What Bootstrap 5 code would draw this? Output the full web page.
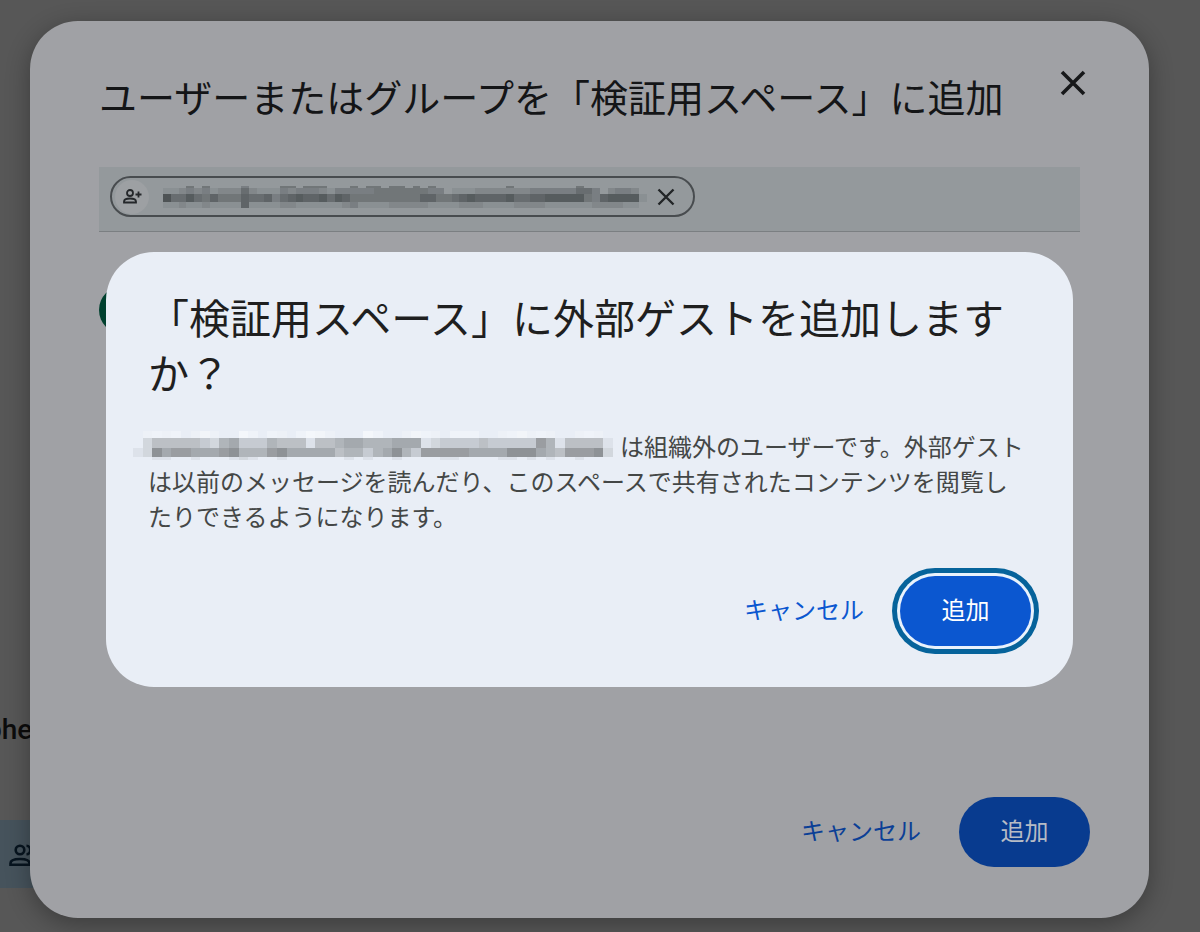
<!DOCTYPE html>
<html lang="ja">
<head>
<meta charset="utf-8">
<meta name="viewport" content="width=device-width, initial-scale=1">
<title>ユーザーまたはグループを追加</title>
<link href="https://cdn.jsdelivr.net/npm/bootstrap@5.3.0/dist/css/bootstrap.min.css" rel="stylesheet">
<style>
  body { background: #575757; font-family: "Noto Sans CJK JP", sans-serif; color: #1f1f1f; }
  .page-behind { font-family: Roboto, "Noto Sans CJK JP", sans-serif; }
  .behind-name { left: -14px; top: 712px; font-size: 28px; line-height: 36px; font-weight: 500; color: #0c0c0c; }
  .behind-pill { left: -60px; top: 820px; width: 180px; height: 68px; border-radius: 20px; background: #46535c; padding-left: 67px; }
  .sheet { margin: 21px 51px 14px 30px; min-height: calc(100vh - 35px); border-radius: 48px; background: #a0a1a5;
           padding: 0 59px 51px 69px; box-shadow: 0 6px 24px rgba(0,0,0,.32); }
  .sheet-title { font-size: 38px; line-height: 56px; font-weight: 400; margin: 47px 0 43px; color: #141517; }
  .close-btn { right: 52px; top: 38px; width: 48px; height: 48px; }
  .people-field { background: #94999c; border-bottom: 1px solid #7b7f82; height: 65px; padding: 9px 11px; margin-right: 10px; }
  .chip { height: 41px; width: 585px; border: 2px solid #484c4f; border-radius: 21px; padding: 0 14px 0 3px; }
  .chip-icon { width: 34px; height: 34px; background: #9da0a3; margin-right: 14px; }
  .avatar { width: 48px; height: 48px; background: #00402f; margin-top: 54px; }
  .btn-pill { width: 131px; height: 70px; border-radius: 35px; font-size: 24px; line-height: 36px; padding: 0 0 4px; }
  .btn-text { font-size: 24px; line-height: 36px; padding: 0 0 4px; }
  .sheet-actions { gap: 38px; }
  .confirm-actions { gap: 36px; }
  .sheet .btn-dim { background: #083b8f; color: #b6bbc5; }
  .sheet .btn-text-dim { color: #0b3f96; }
  .confirm { left: 76px; right: 76px; top: 231px; background: #e9eef6; border-radius: 48px; padding: 37px 42px 41px; }
  .confirm-title { font-size: 41px; line-height: 55px; font-weight: 400; margin-bottom: 29px; color: #1f1f1f; }
  .confirm-text { font-size: 24px; line-height: 35px; color: #444746; margin: 0 2px 43px 0; }
  .confirm .btn-go { background: #0b57d0; color: #fff; box-shadow: 0 0 0 3px #e9f2fc, 0 0 0 8px #06639b; }
  .confirm .btn-stop { color: #0b57d0; }
  .masked { overflow: visible; }
</style>
</head>
<body class="position-relative overflow-hidden min-vh-100">

<div class="page-behind" aria-hidden="true">
  <div class="behind-name position-absolute">phe</div>
  <div class="behind-pill position-absolute d-flex align-items-center">
    <svg width="36" height="28" viewBox="0 0 36 28" fill="none" stroke="#07141f" stroke-width="2.600">
      <circle cx="13" cy="10" r="4.300"/>
      <path d="M3.500 24.700v-1.500c0-2.800 4.500-4.200 9.500-4.200s9.500 1.400 9.500 4.200v1.500z"/>
      <path d="M19.500 5.700c5 0 5 8.600 0 8.600M25 19c4 1 5 3 5 5.700"/>
    </svg>
  </div>
</div>

<main class="sheet position-relative d-flex flex-column" role="dialog" aria-labelledby="sheetTitle">
  <h1 class="sheet-title text-nowrap" id="sheetTitle">ユーザーまたはグループを「検証用スペース」に追加</h1>
  <button type="button" class="close-btn btn p-0 border-0 position-absolute d-flex align-items-center justify-content-center" aria-label="閉じる">
    <svg width="26" height="26" viewBox="0 0 26 26" stroke="#17181a" stroke-width="3.600"><path d="M2 2L24 24M24 2L2 24"/></svg>
  </button>

  <div class="people-field">
    <div class="chip d-flex align-items-center">
      <span class="chip-icon rounded-circle d-flex align-items-center justify-content-center">
        <svg width="20" height="18" viewBox="0 0 20 18" fill="none" stroke="#24272a" stroke-width="1.800">
          <circle cx="8" cy="5" r="3"/>
          <path d="M2 14.500v-1c0-2 3-3 6-3s6 1 6 3v1zM16.500 3.500v6M13.500 6.500h6"/>
        </svg>
      </span>
      <svg class="masked flex-shrink-0" id="chipMask" width="486" height="26" role="img" aria-label="メールアドレス（非表示）"></svg>
      <button type="button" class="btn p-0 border-0 d-flex ms-auto me-1" aria-label="削除">
        <svg width="18" height="18" viewBox="0 0 18 18" stroke="#222527" stroke-width="2.400"><path d="M1.500 1.500l15 15M16.500 1.500l-15 15"/></svg>
      </button>
    </div>
  </div>

  <div class="avatar rounded-circle"></div>

  <div class="sheet-actions d-flex justify-content-end align-items-center mt-auto">
    <button type="button" class="btn btn-text btn-text-dim border-0">キャンセル</button>
    <button type="button" class="btn btn-pill btn-dim border-0">追加</button>
  </div>

  <section class="confirm position-absolute" role="alertdialog" aria-labelledby="confirmTitle">
    <h2 class="confirm-title" id="confirmTitle">「検証用スペース」に外部ゲストを追加しますか？</h2>
    <p class="confirm-text"><svg class="masked align-middle" id="textMask" width="472" height="28" role="img" aria-label="メールアドレス（非表示）"></svg>は組織外のユーザーです。外部ゲストは以前のメッセージを読んだり、このスペースで共有されたコンテンツを閲覧したりできるようになります。</p>
    <div class="confirm-actions d-flex justify-content-end align-items-center">
      <button type="button" class="btn btn-text btn-stop border-0">キャンセル</button>
      <button type="button" class="btn btn-pill btn-go border-0">追加</button>
    </div>
  </section>
</main>

<script src="https://cdn.jsdelivr.net/npm/bootstrap@5.3.0/dist/js/bootstrap.bundle.min.js"></script>
<script>
  // Each digit is the strength of one mosaic cell.
  function mosaic(id, x0, step, ink, rows) {
    const svg = document.getElementById(id);
    rows.forEach(([y, h, levels, fill]) => [...levels].forEach((c, i) => {
      if (c === '0') return;
      const r = document.createElementNS('http://www.w3.org/2000/svg', 'rect');
      const a = { x: x0 + i * step, y, width: step, height: h, fill: fill || ink, 'fill-opacity': c / 10, 'shape-rendering': 'crispEdges' };
      for (const k in a) r.setAttribute(k, a[k]);
      svg.appendChild(r);
    }));
  }
  mosaic('chipMask', 0, 7.8, '#3c4144', [
    [2, 2, '00040400003000044044400040440440404000000000400000000400000'],
    [4, 6, '11232312225211132333213333344444443301112222222333333553023320'],
    [10, 8, '85575464446556356766757644444444466445676666755667777743677771'],
    [18, 6, '11211211116111122111111231111222221111222111122221111112222110']
  ]);
  mosaic('textMask', -15, 9.6, '#777b7e', [
    [-4, 7, '02323024200530320354200053002432033300234232002320', '#ffffff'],
    [3, 10, '02444443256333544414456655566612333343333375144441'],
    [13, 9, '12867766678555786666645535685377777666688865477782'],
    [22, 3, '00110010001210010000001010010000110000110101001000']
  ]);
</script>
</body>
</html>
